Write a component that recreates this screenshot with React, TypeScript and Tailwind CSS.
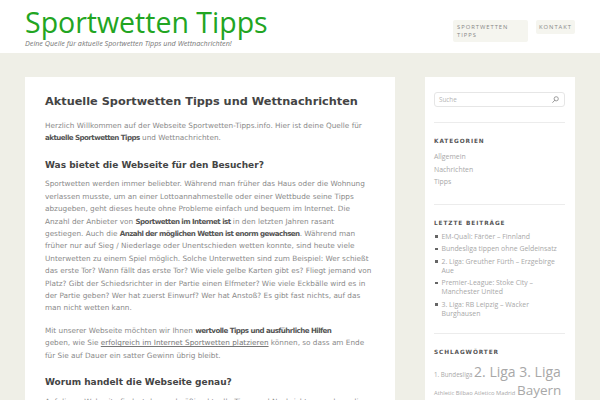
import React from 'react';

const body = { fontFamily: '"DejaVu Sans", Verdana, sans-serif' };
const sans = { fontFamily: '"Open Sans", "Liberation Sans", sans-serif' };

function SearchIcon() {
  return (
    <svg className="w-[7px] h-[7px]" viewBox="0 0 10 10" fill="none" stroke="#9a9a9a" strokeWidth={1.4}>
      <circle cx="6" cy="4" r="3" />
      <path d="M4 6L1 9.2" strokeLinecap="round" />
    </svg>
  );
}

function Header() {
  return (
    <header className="h-[53px] bg-white px-[25px] flex justify-between">
      <div className="pt-[5px]">
        <h1 className="text-[28.5px] leading-[34px] text-[#22a522]" style={sans}>
          Sportwetten Tipps
        </h1>
        <p className="text-[7.2px] italic text-[#777] leading-[8px]" style={sans}>
          Deine Quelle für aktuelle Sportwetten Tipps und Wettnachrichten!
        </p>
      </div>
      <nav className="flex items-start gap-[8px] pt-[20px] text-[5.8px] tracking-[1px] text-[#888] uppercase" style={sans}>
        <a className="block w-[75px] px-[4px] pt-[3px] pb-[3px] leading-[8px] bg-[#f5f5ef] rounded-[2px]">
          Sportwetten
          <br />
          Tipps
        </a>
        <a className="block px-[3px] py-[3px] leading-[8px] bg-[#f5f5ef] rounded-[2px]">Kontakt</a>
      </nav>
    </header>
  );
}

function Article() {
  const p = 'text-[7.3px] leading-[12.4px] text-[#8a8a8a] mb-[10px] whitespace-nowrap';
  const b = 'font-bold text-[#555] text-[7.1px] tracking-[-0.55px]';
  const h2 = 'text-[9px] leading-[13px] font-bold text-[#444] mt-[14px] mb-[6.5px]';
  return (
    <article className="w-[370px] shrink-0 bg-white px-[20px] pt-[18px] overflow-hidden" style={body}>
      <h1 className="text-[11.3px] leading-[14px] font-bold text-[#444] mb-[11px]">
        Aktuelle Sportwetten Tipps und Wettnachrichten
      </h1>
      <p className={p}>
        Herzlich Willkommen auf der Webseite Sportwetten-Tipps.info. Hier ist deine Quelle für
        <br />
        <strong className={b}>aktuelle Sportwetten Tipps</strong> und Wettnachrichten.
      </p>
      <h2 className={h2}>Was bietet die Webseite für den Besucher?</h2>
      <p className={p}>
        Sportwetten werden immer beliebter. Während man früher das Haus oder die Wohnung
        <br />
        verlassen musste, um an einer Lottoannahmestelle oder einer Wettbude seine Tipps
        <br />
        abzugeben, geht dieses heute ohne Probleme einfach und bequem im Internet. Die
        <br />
        Anzahl der Anbieter von <strong className={b}>Sportwetten im Internet ist</strong> in den letzten Jahren rasant
        <br />
        gestiegen. Auch die <strong className={b}>Anzahl der möglichen Wetten ist enorm gewachsen</strong>. Während man
        <br />
        früher nur auf Sieg / Niederlage oder Unentschieden wetten konnte, sind heute viele
        <br />
        Unterwetten zu einem Spiel möglich. Solche Unterwetten sind zum Beispiel: Wer schießt
        <br />
        das erste Tor? Wann fällt das erste Tor? Wie viele gelbe Karten gibt es? Fliegt jemand von
        <br />
        Platz? Gibt der Schiedsrichter in der Partie einen Elfmeter? Wie viele Eckbälle wird es in
        <br />
        der Partie geben? Wer hat zuerst Einwurf? Wer hat Anstoß? Es gibt fast nichts, auf das
        <br />
        man nicht wetten kann.
      </p>
      <p className={p}>
        Mit unserer Webseite möchten wir Ihnen <strong className={b}>wertvolle Tipps und ausführliche Hilfen</strong>
        <br />
        geben, wie Sie <a className="underline text-[#777]">erfolgreich im Internet Sportwetten platzieren</a> können, so
        dass am Ende
        <br />
        für Sie auf Dauer ein satter Gewinn übrig bleibt.
      </p>
      <h2 className={h2}>Worum handelt die Webseite genau?</h2>
      <p className={p}>
        Auf dieser Webseite findest du regelmäßig aktuelle Tipps und Nachrichten rund um die
      </p>
    </article>
  );
}

function Widget({ title, children, last }: { title: string; children: React.ReactNode; last?: boolean }) {
  return (
    <section className={`pt-[14px] ${last ? '' : 'border-b border-[#ececec]'}`}>
      <h3
        className="text-[5.8px] leading-[9px] font-bold tracking-[0.9px] uppercase text-[#555] mb-[5px]"
        style={body}
      >
        {title}
      </h3>
      {children}
    </section>
  );
}

const posts = [
  'EM-Quali: Färöer – Finnland',
  'Bundesliga tippen ohne Geldeinsatz',
  '2. Liga: Greuther Fürth – Erzgebirge Aue',
  'Premier-League: Stoke City – Manchester United',
  '3. Liga: RB Leipzig – Wacker Burghausen',
];

const tags: { name: string; size: string }[] = [
  { name: '1. Bundesliga', size: 'text-[6.2px]' },
  { name: '2. Liga', size: 'text-[14px]' },
  { name: '3. Liga', size: 'text-[14px]' },
  { name: 'Athletic Bilbao', size: 'text-[5.8px]' },
  { name: 'Atletico Madrid', size: 'text-[5.8px]' },
  { name: 'Bayern München', size: 'text-[13.5px]' },
  { name: 'Borussia Dortmund', size: 'text-[6.2px]' },
];

function Sidebar() {
  return (
    <aside className="w-[150px] shrink-0 bg-white pl-[9px] pr-[10px]" style={sans}>
      <div className="pt-[15px] pb-[15px] border-b border-[#ececec]">
        <div className="h-[15px] rounded-[3px] border border-[#e6e6e6] flex items-center justify-between pl-[4px] pr-[5px]">
          <span className="text-[6.3px] text-[#b5b5b5]">Suche</span>
          <SearchIcon />
        </div>
      </div>
      <Widget title="Kategorien">
        <ul className="text-[6.9px] leading-[12.5px] text-[#a8a8a8] pb-[15.5px]">
          <li>Allgemein</li>
          <li>Nachrichten</li>
          <li>Tipps</li>
        </ul>
      </Widget>
      <Widget title="Letzte Beiträge">
        <ul className="text-[6.9px] leading-[9px] text-[#a8a8a8] -mt-[1.5px] pb-[11.5px]">
          {posts.map((t) => (
            <li key={t} className="flex mb-[3.5px]">
              <span className="w-[2.5px] h-[2.5px] bg-[#666] mt-[3.5px] ml-[1px] mr-[4px] shrink-0" />
              <span>{t}</span>
            </li>
          ))}
        </ul>
      </Widget>
      <Widget title="Schlagwörter" last>
        <div className="leading-[14px] text-[#a8a8a8] pt-[2px]">
          {tags.map((t) => (
            <span key={t.name} className={t.size}>
              {t.name}{' '}
            </span>
          ))}
        </div>
      </Widget>
    </aside>
  );
}

export default function App() {
  return (
    <div className="w-[600px] h-[400px] overflow-hidden bg-[#efefe7]">
      <Header />
      <main className="flex gap-[30px] px-[25px] pt-[24px]">
        <Article />
        <Sidebar />
      </main>
    </div>
  );
}
